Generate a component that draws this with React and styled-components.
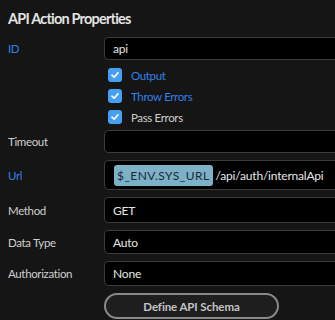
import React from "react";
import styled, { createGlobalStyle } from "styled-components";

const Global = createGlobalStyle`
  html, body { margin: 0; padding: 0; background: #151515; overflow: hidden; }
  body { font-family: Lato, "Liberation Sans", sans-serif; }
`;

const Panel = styled.div`
  width: 335px;
  height: 320px;
  background: #151515;
  padding: 8px 0 0 8px;
  box-sizing: border-box;
  overflow: hidden;
`;

const Title = styled.h2`
  margin: 0 0 7px 0;
  font-size: 14.5px;
  font-weight: 700;
  letter-spacing: -0.8px;
  color: #e2e2e2;
  line-height: 22px;
`;

const Form = styled.div`
  display: grid;
  grid-template-columns: 96px 260px;
  row-gap: 7px;
  align-items: center;
`;

const Label = styled.div`
  font-size: 11.5px;
  letter-spacing: -0.35px;
  color: ${(p) => (p.$accent ? "#2f80e8" : "#cfcfcf")};
`;

const Field = styled.div`
  height: ${(p) => p.$h || 23}px;
  background: #000;
  border: 1px solid #3c3c3c;
  border-radius: 4px;
  box-sizing: border-box;
  display: flex;
  align-items: center;
  padding: 0 8px;
  font-size: 12px;
  letter-spacing: -0.2px;
  color: #e6e6e6;
  gap: 3px;
`;

const Checks = styled.div`
  grid-column: 2;
  display: flex;
  flex-direction: column;
  gap: 7px;
  padding: 1px 0 0 4px;
  margin-bottom: -1px;
`;

const CheckRow = styled.label`
  display: flex;
  align-items: center;
  gap: 9px;
  font-size: 11.5px;
  letter-spacing: -0.35px;
  height: 14px;
  color: ${(p) => (p.$accent ? "#2f80e8" : "#cfcfcf")};
`;

const Box = styled.span`
  width: 14px;
  height: 14px;
  border-radius: 3px;
  background: #45a0f2;
  display: flex;
  align-items: center;
  justify-content: center;
`;

const Chip = styled.span`
  background: #7cb1c8;
  color: #1c2a30;
  border-radius: 3px;
  padding: 3px 3px;
  font-size: 12px;
  letter-spacing: 0.45px;
  line-height: 15px;
  margin-left: 1px;
`;

const Button = styled.button`
  grid-column: 2;
  width: 175px;
  height: 26px;
  border-radius: 13px;
  border: 2px solid #8a8a8a;
  background: #1e1e1e;
  color: #c4c4c4;
  font-family: inherit;
  font-size: 11.5px;
  letter-spacing: -0.1px;
  font-weight: 700;
  padding: 0;
`;

const Check = ({ children, accent }) => (
  <CheckRow $accent={accent}>
    <Box>
      <svg width="10" height="10" viewBox="0 0 10 10">
        <path d="M2 5.2 L4.2 7.2 L8 2.8" stroke="#fff" strokeWidth="1.7" fill="none" strokeLinecap="round" strokeLinejoin="round" />
      </svg>
    </Box>
    {children}
  </CheckRow>
);

export default function App() {
  return (
    <Panel>
      <Global />
      <Title>API Action Properties</Title>
      <Form>
        <Label $accent>ID</Label>
        <Field>api</Field>
        <Checks>
          <Check accent>Output</Check>
          <Check accent>Throw Errors</Check>
          <Check>Pass Errors</Check>
        </Checks>
        <Label>Timeout</Label>
        <Field />
        <Label $accent>Url</Label>
        <Field $h={30}>
          <Chip>$_ENV.SYS_URL</Chip>/api/auth/internalApi
        </Field>
        <Label>Method</Label>
        <Field $h={26}>GET</Field>
        <Label>Data Type</Label>
        <Field $h={24}>Auto</Field>
        <Label>Authorization</Label>
        <Field $h={25}>None</Field>
        <Button>Define API Schema</Button>
      </Form>
    </Panel>
  );
}
